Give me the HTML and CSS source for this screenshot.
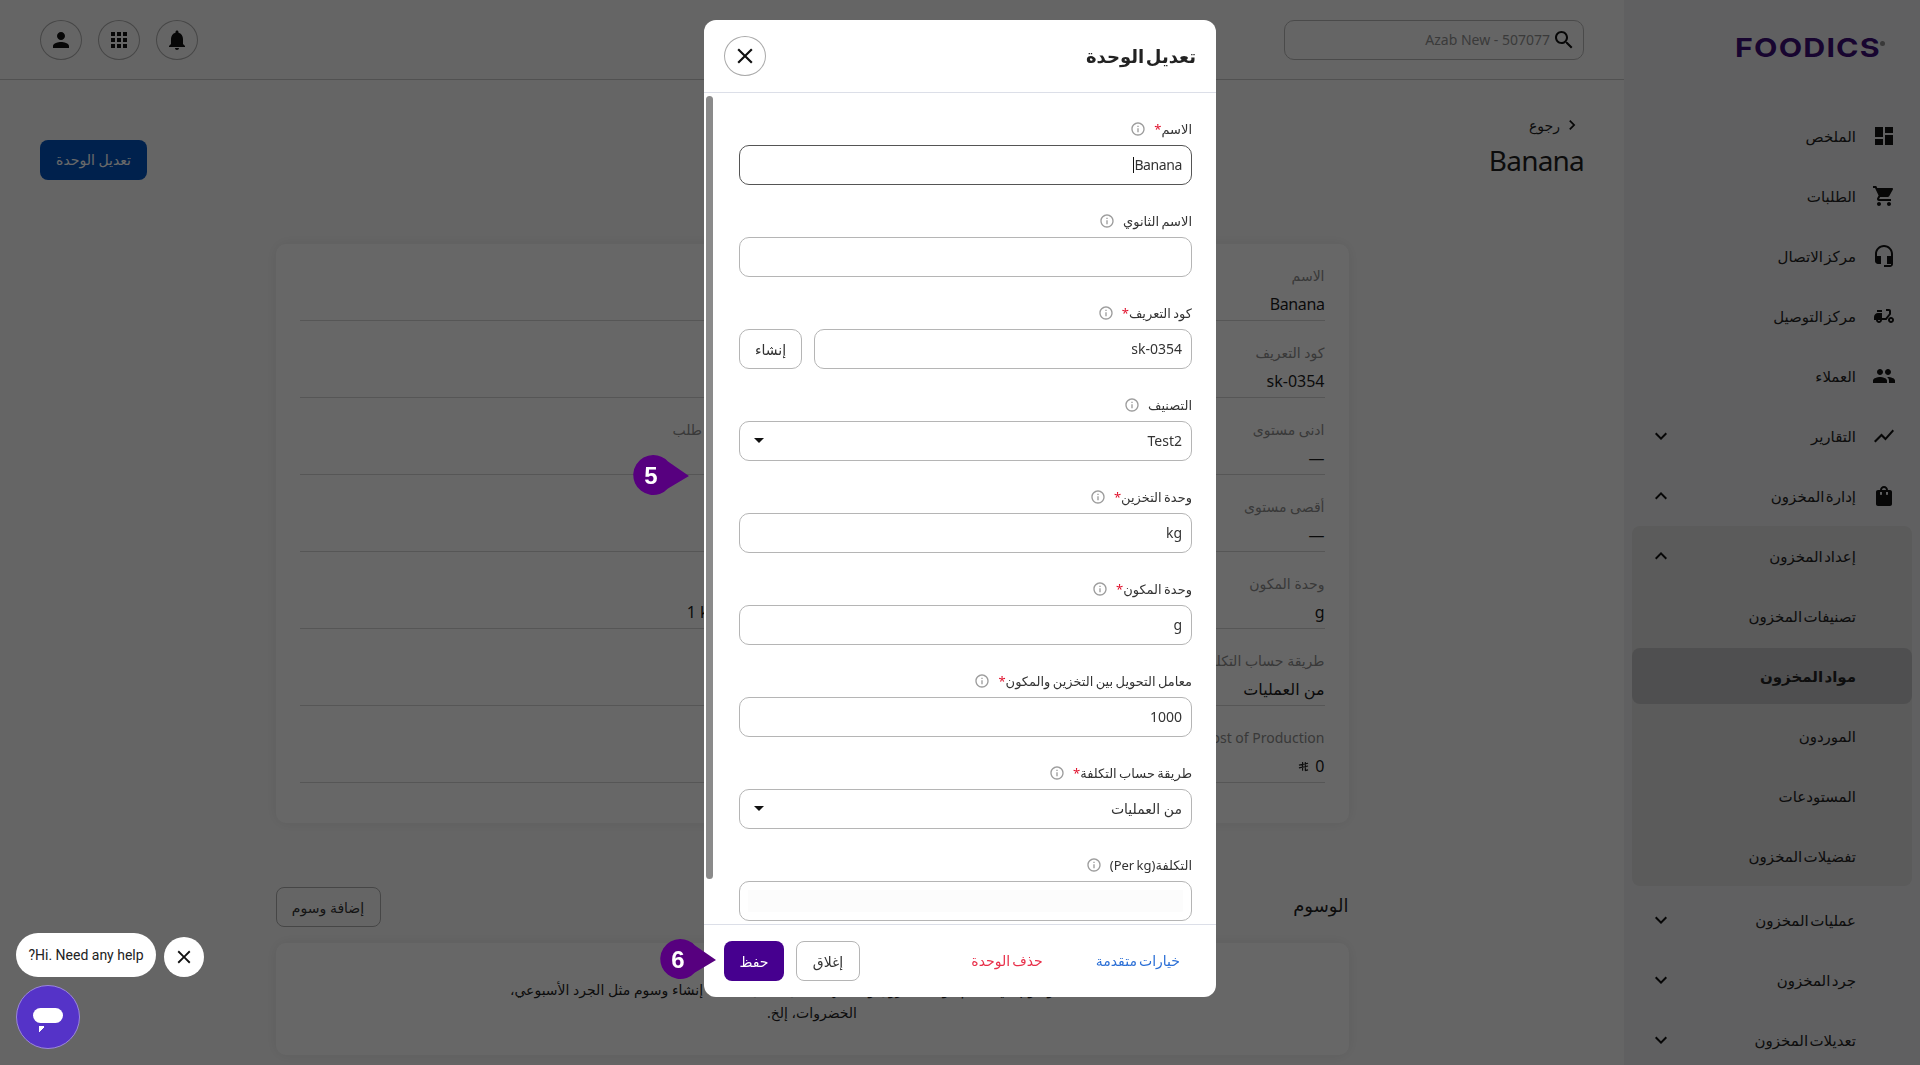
FILE: index.html
```html
<!DOCTYPE html>
<html lang="ar" dir="rtl">
<head>
<meta charset="utf-8">
<title>تعديل الوحدة</title>
<link rel="stylesheet" href="styles.css">
</head>
<body>
<svg class="defs" aria-hidden="true">
  <symbol id="i-dashboard" viewBox="0 0 24 24"><path d="M3 13h8V3H3v10zm0 8h8v-6H3v6zm10 0h8V11h-8v10zm0-18v6h8V3h-8z"/></symbol>
  <symbol id="i-cart" viewBox="0 0 24 24"><path d="M7 18c-1.1 0-1.99.9-1.99 2S5.9 22 7 22s2-.9 2-2-.9-2-2-2zM1 2v2h2l3.6 7.59-1.35 2.45c-.16.28-.25.61-.25.96 0 1.1.9 2 2 2h12v-2H7.42c-.14 0-.25-.11-.25-.25l.03-.12.9-1.63h7.45c.75 0 1.41-.41 1.75-1.03l3.58-6.49c.08-.14.12-.31.12-.48 0-.55-.45-1-1-1H5.21l-.94-2H1zm16 16c-1.1 0-1.99.9-1.99 2s.89 2 1.99 2 2-.9 2-2-.9-2-2-2z"/></symbol>
  <symbol id="i-headset" viewBox="0 0 24 24"><path d="M12 1c-4.97 0-9 4.03-9 9v7c0 1.66 1.34 3 3 3h3v-8H5v-2c0-3.87 3.13-7 7-7s7 3.13 7 7v2h-4v8h4v1h-7v2h6c1.66 0 3-1.34 3-3V10c0-4.97-4.03-9-9-9z"/></symbol>
  <symbol id="i-delivery" viewBox="0 0 24 24"><path d="M19 7c0-1.1-.9-2-2-2h-3v2h3v2.65L13.52 14H10V9H6c-2.21 0-4 1.79-4 4v3h2c0 1.66 1.34 3 3 3s3-1.34 3-3h4.48L19 10.35V7zM7 17c-.55 0-1-.45-1-1h2c0 .55-.45 1-1 1zM5 6h5v2H5zM19 13c-1.66 0-3 1.34-3 3s1.34 3 3 3 3-1.34 3-3-1.34-3-3-3zm0 4c-.55 0-1-.45-1-1s.45-1 1-1 1 .45 1 1-.45 1-1 1z"/></symbol>
  <symbol id="i-people" viewBox="0 0 24 24"><path d="M16 11c1.66 0 2.99-1.34 2.99-3S17.66 5 16 5c-1.66 0-3 1.34-3 3s1.34 3 3 3zm-8 0c1.66 0 2.99-1.34 2.99-3S9.66 5 8 5C6.34 5 5 6.34 5 8s1.34 3 3 3zm0 2c-2.33 0-7 1.17-7 3.5V19h14v-2.5c0-2.33-4.67-3.5-7-3.5zm8 0c-.29 0-.62.02-.97.05 1.16.84 1.97 1.97 1.97 3.45V19h6v-2.5c0-2.33-4.67-3.5-7-3.5z"/></symbol>
  <symbol id="i-chart" viewBox="0 0 24 24"><path d="M3.5 18.49l6-6.01 4 4L22 6.92l-1.41-1.41-7.09 7.97-4-4L2 16.99z"/></symbol>
  <symbol id="i-bag" viewBox="0 0 24 24"><path d="M18 6h-2c0-2.21-1.79-4-4-4S8 3.79 8 6H6c-1.1 0-2 .9-2 2v12c0 1.1.9 2 2 2h12c1.1 0 2-.9 2-2V8c0-1.1-.9-2-2-2zm-8 4c0 .55-.45 1-1 1s-1-.45-1-1V8h2v2zm2-6c1.1 0 2 .9 2 2h-4c0-1.1.9-2 2-2zm4 6c0 .55-.45 1-1 1s-1-.45-1-1V8h2v2z"/></symbol>
  <symbol id="i-person" viewBox="0 0 24 24"><path d="M12 12c2.21 0 4-1.79 4-4s-1.79-4-4-4-4 1.79-4 4 1.79 4 4 4zm0 2c-2.67 0-8 1.34-8 4v2h16v-2c0-2.66-5.33-4-8-4z"/></symbol>
  <symbol id="i-apps" viewBox="0 0 24 24"><path d="M4 8h4V4H4v4zm6 12h4v-4h-4v4zm-6 0h4v-4H4v4zm0-6h4v-4H4v4zm6 0h4v-4h-4v4zm6-10v4h4V4h-4zm-6 4h4V4h-4v4zm6 6h4v-4h-4v4zm0 6h4v-4h-4v4z"/></symbol>
  <symbol id="i-bell" viewBox="0 0 24 24"><path d="M12 22c1.1 0 2-.9 2-2h-4c0 1.1.89 2 2 2zm6-6v-5c0-3.07-1.64-5.64-4.5-6.32V4c0-.83-.67-1.5-1.5-1.5s-1.5.67-1.5 1.5v.68C7.63 5.36 6 7.92 6 11v5l-2 2v1h16v-1l-2-2z"/></symbol>
  <symbol id="i-search" viewBox="0 0 24 24"><path d="M15.5 14h-.79l-.28-.27C15.41 12.59 16 11.11 16 9.5 16 5.91 13.09 3 9.5 3S3 5.91 3 9.5 5.91 16 9.5 16c1.61 0 3.09-.59 4.23-1.57l.27.28v.79l5 4.99L20.49 19l-4.99-5zm-6 0C7.01 14 5 11.99 5 9.5S7.01 5 9.5 5 14 7.01 14 9.5 11.99 14 9.5 14z"/></symbol>
  <symbol id="i-down" viewBox="0 0 24 24"><path d="M16.59 8.59L12 13.17 7.41 8.59 6 10l6 6 6-6z"/></symbol>
  <symbol id="i-up" viewBox="0 0 24 24"><path d="M12 8l-6 6 1.41 1.41L12 10.83l4.59 4.58L18 14z"/></symbol>
  <symbol id="i-right" viewBox="0 0 24 24"><path d="M10 6L8.59 7.41 13.17 12l-4.58 4.59L10 18l6-6z"/></symbol>
  <symbol id="i-close" viewBox="0 0 24 24"><path d="M19 6.41L17.59 5 12 10.59 6.41 5 5 6.41 10.59 12 5 17.59 6.41 19 12 13.41 17.59 19 19 17.59 13.41 12z"/></symbol>
  <symbol id="i-info" viewBox="0 0 24 24"><path d="M11 7h2v2h-2zm0 4h2v6h-2zm1-9C6.48 2 2 6.48 2 12s4.48 10 10 10 10-4.48 10-10S17.52 2 12 2zm0 18c-4.41 0-8-3.59-8-8s3.59-8 8-8 8 3.59 8 8-3.59 8-8 8z"/></symbol>
</svg>

<div class="app">
  <aside class="sidebar">
    <div class="logo" dir="ltr"><span class="logo-text">FOODICS</span><i class="logo-reg"></i></div>
    <nav class="nav">
      <a class="nav-item"><svg class="nav-icon"><use href="#i-dashboard"/></svg><span>الملخص</span></a>
      <a class="nav-item"><svg class="nav-icon"><use href="#i-cart"/></svg><span>الطلبات</span></a>
      <a class="nav-item"><svg class="nav-icon"><use href="#i-headset"/></svg><span>مركز الاتصال</span></a>
      <a class="nav-item"><svg class="nav-icon"><use href="#i-delivery"/></svg><span>مركز التوصيل</span></a>
      <a class="nav-item"><svg class="nav-icon"><use href="#i-people"/></svg><span>العملاء</span></a>
      <a class="nav-item"><svg class="nav-icon"><use href="#i-chart"/></svg><span>التقارير</span><svg class="chev"><use href="#i-down"/></svg></a>
      <a class="nav-item"><svg class="nav-icon"><use href="#i-bag"/></svg><span>إدارة المخزون</span><svg class="chev"><use href="#i-up"/></svg></a>
      <div class="subgroup">
        <a class="sub-item sub-head"><span>إعداد المخزون</span><svg class="chev"><use href="#i-up"/></svg></a>
        <a class="sub-item"><span>تصنيفات المخزون</span></a>
        <a class="sub-item active"><span>مواد المخزون</span></a>
        <a class="sub-item"><span>الموردون</span></a>
        <a class="sub-item"><span>المستودعات</span></a>
        <a class="sub-item"><span>تفضيلات المخزون</span></a>
      </div>
      <a class="nav-item nav-plain"><span>عمليات المخزون</span><svg class="chev"><use href="#i-down"/></svg></a>
      <a class="nav-item nav-plain"><span>جرد المخزون</span><svg class="chev"><use href="#i-down"/></svg></a>
      <a class="nav-item nav-plain"><span>تعديلات المخزون</span><svg class="chev"><use href="#i-down"/></svg></a>
    </nav>
  </aside>

  <main class="main">
    <header class="topbar">
      <div class="search"><svg class="search-icon"><use href="#i-search"/></svg><span>Azab New - 507077</span></div>
      <div class="top-actions">
        <button class="round"><svg><use href="#i-bell"/></svg></button>
        <button class="round"><svg><use href="#i-apps"/></svg></button>
        <button class="round"><svg><use href="#i-person"/></svg></button>
      </div>
    </header>

    <div class="content">
      <div class="page-head">
        <div>
          <div class="back"><svg><use href="#i-right"/></svg><span>رجوع</span></div>
          <h1 class="page-title">Banana</h1>
        </div>
        <button class="primary-btn">تعديل الوحدة</button>
      </div>

      <section class="card details">
        <div class="cell"><div class="k">الاسم</div><div class="v tight">Banana</div></div>
        <div class="cell"></div>
        <div class="cell"><div class="k">كود التعريف</div><div class="v">sk-0354</div></div>
        <div class="cell"></div>
        <div class="cell"><div class="k">ادنى مستوى</div><div class="v">—</div></div>
        <div class="cell"><div class="k">كمية الإعادة لكل طلب</div></div>
        <div class="cell"><div class="k">أقصى مستوى</div><div class="v">—</div></div>
        <div class="cell"></div>
        <div class="cell"><div class="k">وحدة المكون</div><div class="v">g</div></div>
        <div class="cell"><div class="k">التحويل</div><div class="v"><bdi dir="ltr">1 kg = 1000.0 g</bdi></div></div>
        <div class="cell"><div class="k">طريقة حساب التكلفة</div><div class="v">من العمليات</div></div>
        <div class="cell"></div>
        <div class="cell"><div class="k">Cost of Production</div><div class="v currency"><span>0</span><svg viewBox="0 0 12 12"><path d="M5 1v9.500M8 1v9.500M1 4.500l10-2M1 7.500l10-2M7.500 10.500l3.500-.8"/></svg></div></div>
        <div class="cell"></div>
      </section>

      <div class="tags-head">
        <h2 class="tags-title">الوسوم</h2>
        <button class="outline-btn">إضافة وسوم</button>
      </div>
      <section class="card tags-card">
        <p>تساعدك الوسوم في تنظيم مواد المخزون وتصنيفها بشكل أفضل، يمكنك إنشاء وسوم مثل الجرد الأسبوعي،<br>الخضروات، إلخ.</p>
      </section>
    </div>
  </main>
</div>

<div class="overlay">
  <div class="modal">
    <div class="modal-head">
      <h2 class="modal-title">تعديل الوحدة</h2>
      <button class="modal-close"><svg><use href="#i-close"/></svg></button>
    </div>
    <div class="modal-body">
      <span class="thumb"></span>
      <div class="field"><label class="label">الاسم<b>*</b><svg class="info"><use href="#i-info"/></svg></label><div class="input focused"><span class="tight">Banana</span><i class="caret"></i></div></div>
      <div class="field"><label class="label">الاسم الثانوي<svg class="info"><use href="#i-info"/></svg></label><div class="input"></div></div>
      <div class="field"><label class="label">كود التعريف<b>*</b><svg class="info"><use href="#i-info"/></svg></label><div class="input-row"><div class="input grow"><span>sk-0354</span></div><button class="gen">إنشاء</button></div></div>
      <div class="field"><label class="label">التصنيف<svg class="info"><use href="#i-info"/></svg></label><div class="input select"><span>Test2</span><i class="arrow"></i></div></div>
      <div class="field"><label class="label">وحدة التخزين<b>*</b><svg class="info"><use href="#i-info"/></svg></label><div class="input"><span>kg</span></div></div>
      <div class="field"><label class="label">وحدة المكون<b>*</b><svg class="info"><use href="#i-info"/></svg></label><div class="input"><span>g</span></div></div>
      <div class="field"><label class="label">معامل التحويل بين التخزين والمكون<b>*</b><svg class="info"><use href="#i-info"/></svg></label><div class="input"><span>1000</span></div></div>
      <div class="field"><label class="label">طريقة حساب التكلفة<b>*</b><svg class="info"><use href="#i-info"/></svg></label><div class="input select"><span>من العمليات</span><i class="arrow"></i></div></div>
      <div class="field"><label class="label">التكلفة(Per kg)<svg class="info"><use href="#i-info"/></svg></label><div class="input muted"></div></div>
    </div>
    <div class="modal-foot">
      <div class="foot-links">
        <a class="link-blue">خيارات متقدمة</a>
        <a class="link-red">حذف الوحدة</a>
      </div>
      <div class="foot-btns">
        <button class="btn-close">إغلاق</button>
        <button class="btn-save">حفظ</button>
      </div>
    </div>
  </div>

  <svg class="marker marker-5" viewBox="0 0 60 44"><path d="M20 2a20 20 0 0 1 15 6.500L56 23 35 35.500A20 20 0 1 1 20 2z"/><text x="18" y="31">5</text></svg>
  <svg class="marker marker-6" viewBox="0 0 60 44"><path d="M20 2a20 20 0 0 1 15 6.500L56 23 35 35.500A20 20 0 1 1 20 2z"/><text x="18" y="31">6</text></svg>
</div>

<div class="chat">
  <div class="chat-row">
    <div class="chat-bubble" dir="rtl">Hi. Need any help?</div>
    <button class="chat-x"><svg><use href="#i-close"/></svg></button>
  </div>
  <button class="chat-btn"><span class="chat-pill"></span><span class="chat-tail"></span></button>
</div>
</body>
</html>
```
FILE: styles.css
```css
* { box-sizing: border-box; }
html, body { margin: 0; height: 100%; }
body {
  font-family: "Noto Sans", "DejaVu Sans", sans-serif;
  font-size: 14px;
  color: #1f1f1f;
  overflow: hidden;
  background: #f6f6f6;
}
button { font: inherit; cursor: pointer; }
h1, h2, p { margin: 0; font-weight: 400; }
.defs { display: none; }
.tight { letter-spacing: -.4px; }

.app { display: flex; height: 100vh; }

/* sidebar */
.sidebar { width: 296px; flex: none; background: #eaeaeb; }
.logo { height: 106px; padding: 32px 0 0 111px; display: flex; align-items: flex-start; }
.logo-text {
  display: block;
  font-family: "Inter", sans-serif;
  font-size: 26px;
  line-height: 32px;
  font-weight: 700;
  letter-spacing: 1px;
  color: #3a0e74;
  transform: scaleX(1.170);
  transform-origin: left center;
}
.logo-reg {
  width: 5px;
  height: 5px;
  margin: 9px 0 0 20px;
  border-radius: 50%;
  background: #8a8a8a;
}
.nav { display: flex; flex-direction: column; }
.nav-item {
  height: 60px;
  display: flex;
  align-items: center;
  gap: 16px;
  padding: 0 24px 0 25px;
  font-size: 15px;
  word-spacing: -2.500px;
  color: #222;
}
.nav-plain { padding-right: 64px; }
.nav-icon { width: 24px; height: 24px; fill: #111; flex: none; }
.chev { width: 24px; height: 24px; fill: #111; margin-right: auto; flex: none; }
.subgroup {
  margin: 0 8px 4px;
  background: #dcdcdd;
  border-radius: 8px;
  display: flex;
  flex-direction: column;
}
.sub-item {
  height: 56px;
  margin: 2px 0;
  display: flex;
  align-items: center;
  padding: 0 56px 0 17px;
  font-size: 15px;
  word-spacing: -2.500px;
  color: #222;
  border-radius: 8px;
}
.sub-item.active { background: #c1c1c2; font-weight: 600; }

/* main */
.main { flex: 1; min-width: 0; background: #f6f6f6; }
.topbar {
  height: 80px;
  display: flex;
  align-items: center;
  justify-content: space-between;
  padding: 0 40px;
  border-bottom: 1px solid #c4c4c4;
}
.search {
  width: 300px;
  height: 40px;
  border: 1px solid #b4b4b4;
  border-radius: 10px;
  display: flex;
  align-items: center;
  gap: 2px;
  padding: 0 7px;
  color: #8e8e8e;
  font-size: 14px;
}
.search-icon { width: 24px; height: 24px; fill: #111; }
.top-actions { display: flex; gap: 16px; }
.round {
  width: 42px;
  height: 40px;
  border-radius: 50%;
  border: 1px solid #aaa;
  background: transparent;
  padding: 0;
  display: flex;
  align-items: center;
  justify-content: center;
}
.round svg { width: 24px; height: 24px; fill: #111; }

.content { padding: 0 40px; }
.page-head { display: flex; justify-content: space-between; align-items: flex-end; padding-top: 33px; }
.back { display: flex; align-items: center; height: 24px; margin-bottom: 3px; font-size: 14px; }
.back svg { width: 20px; height: 20px; fill: #111; margin-right: 2px; }
.back span { margin-right: 2px; }
.page-title { font-size: 28px; line-height: 40px; letter-spacing: -.8px; }
.primary-btn {
  width: 107px;
  height: 40px;
  border: 0;
  border-radius: 8px;
  background: #0050bc;
  color: #fff;
  font-size: 14px;
  padding: 0 0 1px;
}

.card {
  width: 1073px;
  margin: 0 auto;
  background: #fbfbfb;
  border-radius: 10px;
  box-shadow: 0 0 16px rgba(0, 0, 0, .08);
}
.details {
  margin-top: 64px;
  height: 579px;
  padding: 0 24px;
  display: grid;
  grid-template-columns: 1fr 1fr;
  grid-auto-rows: 77px;
  column-gap: 24px;
}
.cell { border-bottom: 1px solid #d0d0d0; padding-top: 22px; }
.k { font-size: 14px; line-height: 20px; color: #8a8a8a; }
.v { font-size: 16px; line-height: 24px; margin-top: 6px; color: #1c1c1c; }
.currency { display: flex; align-items: center; gap: 6px; }
.currency svg { width: 11px; height: 11px; fill: none; stroke: #222; stroke-width: 1.200; }

.tags-head { width: 1073px; margin: 64px auto 16px; display: flex; justify-content: space-between; align-items: center; }
.tags-title { font-size: 18px; font-weight: 500; margin-top: -4px; }
.outline-btn {
  width: 105px;
  height: 40px;
  border: 1px solid #aaa;
  border-radius: 8px;
  background: transparent;
  color: #333;
  padding: 0;
}
.tags-card { height: 112px; padding-top: 35px; text-align: center; line-height: 23px; font-size: 14px; }

/* modal overlay */
.overlay {
  position: fixed;
  inset: 0;
  background: rgba(0, 0, 0, .59);
  display: flex;
  justify-content: center;
  align-items: flex-start;
  padding-top: 20px;
}
.modal {
  width: 512px;
  height: 977px;
  background: #fff;
  border-radius: 12px;
  display: flex;
  flex-direction: column;
  overflow: hidden;
}
.modal-head {
  height: 73px;
  flex: none;
  display: flex;
  align-items: center;
  justify-content: space-between;
  padding: 0 20px;
  border-bottom: 1px solid #dcdfe8;
}
.modal-title { font-size: 18px; font-weight: 700; color: #222; word-spacing: -3px; }
.modal-close {
  width: 42px;
  height: 40px;
  border-radius: 50%;
  border: 1px solid #aaa;
  background: #fff;
  padding: 0;
  display: flex;
  align-items: center;
  justify-content: center;
}
.modal-close svg { width: 26px; height: 26px; fill: #111; }
.modal-body {
  flex: 1;
  min-height: 0;
  overflow: hidden;
  position: relative;
  padding: 26px 24px 0 35px;
}
.thumb {
  position: absolute;
  left: 2px;
  top: 3px;
  width: 7px;
  height: 783px;
  border-radius: 4px;
  background: #8a8a8a;
}
.field { margin-bottom: 26px; }
.label {
  display: flex;
  align-items: center;
  height: 20px;
  margin-bottom: 6px;
  font-size: 13px;
  word-spacing: -1px;
  color: #333;
}
.label b { color: #e0122d; font-weight: 400; }
.info { width: 16px; height: 16px; fill: #9c9c9c; margin-right: 8px; }
.input {
  height: 40px;
  border: 1px solid #b5b5b5;
  border-radius: 10px;
  display: flex;
  align-items: center;
  padding: 0 9px 1px;
  font-size: 14px;
  color: #333;
  background: #fff;
}
.focused { border-color: #555; }
.caret { width: 1px; height: 16px; background: #111; }
.input-row { display: flex; gap: 12px; }
.grow { flex: 1; }
.gen {
  width: 63px;
  height: 40px;
  border: 1px solid #b5b5b5;
  border-radius: 10px;
  background: #fff;
  color: #333;
  padding: 0;
}
.select { justify-content: space-between; }
.arrow {
  width: 0;
  height: 0;
  margin-left: 5px;
  border-style: solid;
  border-width: 5px 5px 0;
  border-color: #111 transparent transparent;
}
.muted { box-shadow: inset 0 0 0 8px #fff, inset 0 0 0 40px #fcfcfc; }
.modal-foot {
  height: 73px;
  flex: none;
  display: flex;
  align-items: center;
  justify-content: space-between;
  padding: 0 36px 0 20px;
  border-top: 1px solid #dcdfe8;
}
.foot-links { display: flex; gap: 53px; font-size: 14px; word-spacing: -1.500px; padding-bottom: 2px; }
.link-blue { color: #2b6fd6; }
.link-red { color: #e8304a; }
.foot-btns { display: flex; gap: 12px; }
.btn-close {
  width: 64px;
  height: 40px;
  border: 1px solid #b5b5b5;
  border-radius: 8px;
  background: #fff;
  color: #333;
  padding: 0;
}
.btn-save {
  width: 60px;
  height: 40px;
  border: 0;
  border-radius: 8px;
  background: #46008f;
  color: #fff;
  padding: 0;
}

/* annotation markers */
.marker { position: absolute; width: 60px; height: 44px; }
.marker path { fill: #57007f; }
.marker text { fill: #fff; font-family: "Liberation Sans", sans-serif; font-weight: 700; font-size: 24px; text-anchor: middle; }
.marker-5 { left: 633px; top: 453px; }
.marker-6 { left: 660px; top: 937px; }

/* chat */
.chat {
  position: fixed;
  left: 16px;
  top: 933px;
  direction: ltr;
  display: flex;
  flex-direction: column;
  gap: 8px;
  align-items: flex-start;
}
.chat-row { display: flex; align-items: flex-end; gap: 8px; }
.chat-bubble {
  width: 140px;
  height: 44px;
  border-radius: 22px;
  background: #fff;
  display: flex;
  align-items: center;
  justify-content: center;
  font-size: 14px;
  color: #222;
  font-family: "Roboto", sans-serif;
}
.chat-x {
  width: 40px;
  height: 40px;
  border: 0;
  border-radius: 50%;
  background: #fff;
  padding: 0;
  display: flex;
  align-items: center;
  justify-content: center;
}
.chat-x svg { width: 22px; height: 22px; fill: #111; }
.chat-btn {
  position: relative;
  width: 64px;
  height: 64px;
  border: 1px solid #9b86dc;
  border-radius: 50%;
  background: #5533c8;
  padding: 0;
}
.chat-pill {
  position: absolute;
  left: 16px;
  top: 22px;
  width: 30px;
  height: 15px;
  border-radius: 8px;
  background: #fff;
}
.chat-tail {
  position: absolute;
  left: 22px;
  top: 40px;
  width: 6px;
  height: 6px;
  background: linear-gradient(to top left, transparent 50%, #fff 50%);
}
```
